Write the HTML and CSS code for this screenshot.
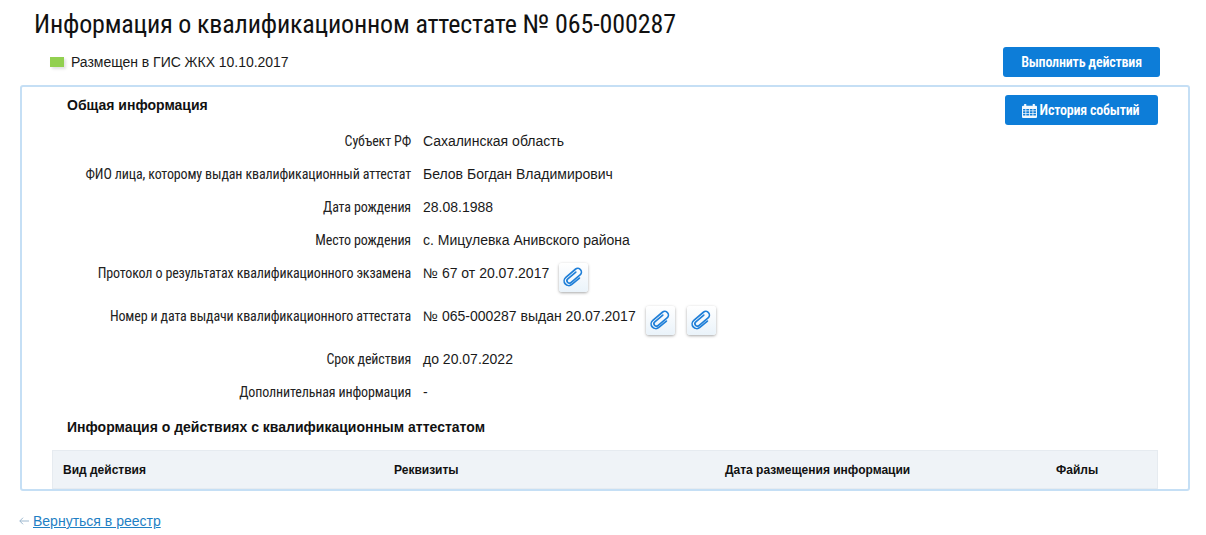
FILE: index.html
```html
<!DOCTYPE html>
<html lang="ru">
<head>
    <meta charset="UTF-8">
    <title>Информация о квалификационном аттестате</title>
    <link rel="stylesheet" href="styles.css">
</head>
<body>
    <svg class="defs" width="0" height="0">
        <symbol id="clip" viewBox="0 0 24 24">
            <path transform="rotate(50 12 12)" d="M9.500 7V17a2.300 2.300 0 0 0 4.600 0V5.500a3.500 3.500 0 0 0-7 0V17.500a4.500 4.500 0 0 0 9 0V8" fill="none" stroke="currentColor" stroke-width="1.600" stroke-linecap="round"/>
        </symbol>
    </svg>

    <h1 class="page-title">Информация о квалификационном аттестате <span class="cert-mark">№</span> <span class="cert-no">065-000287</span></h1>

    <div class="status-row">
        <div class="status"><span class="status-mark"></span>Размещен в ГИС ЖКХ 10.10.2017</div>
        <button class="btn btn-wide">Выполнить действия</button>
    </div>

    <section class="panel">
        <div class="panel-head">
            <h2>Общая информация</h2>
            <button class="btn btn-history">
                <svg class="cal" viewBox="0 0 14 14"><path fill="currentColor" d="M0 3.500a1 1 0 0 1 1-1h1V1h2v1.500h6V1h2v1.500h1a1 1 0 0 1 1 1V13a1 1 0 0 1-1 1H1a1 1 0 0 1-1-1zM1 5.500v1.500h2.200V5.500zm3 0v1.500h2.500V5.500zm3.300 0v1.500h2.500V5.500zm3.300 0v1.500H13V5.500zM1 7.800v1.500h2.200V7.800zm3 0v1.500h2.500V7.800zm3.300 0v1.500h2.500V7.800zm3.300 0v1.500H13V7.800zM1 10.100v1.500h2.200v-1.500zm3 0v1.500h2.500v-1.500zm3.300 0v1.500h2.500v-1.500zm3.300 0v1.500H13v-1.500z" fill-rule="evenodd" opacity="0.95"/></svg>
                История событий
            </button>
        </div>

        <dl class="info">
            <dt>Субъект РФ</dt>
            <dd>Сахалинская область</dd>
            <dt>ФИО лица, которому выдан квалификационный аттестат</dt>
            <dd>Белов Богдан Владимирович</dd>
            <dt>Дата рождения</dt>
            <dd>28.08.1988</dd>
            <dt>Место рождения</dt>
            <dd>с. Мицулевка Анивского района</dd>
            <dt class="tall">Протокол о результатах квалификационного экзамена</dt>
            <dd class="tall">№ 67 от 20.07.2017 <span class="clip"><svg><use href="#clip"/></svg></span></dd>
            <dt class="tall">Номер и дата выдачи квалификационного аттестата</dt>
            <dd class="tall">№ 065-000287 выдан 20.07.2017 <span class="clip"><svg><use href="#clip"/></svg></span><span class="clip"><svg><use href="#clip"/></svg></span></dd>
            <dt>Срок действия</dt>
            <dd>до 20.07.2022</dd>
            <dt>Дополнительная информация</dt>
            <dd>-</dd>
        </dl>

        <h2 class="actions-title">Информация о действиях с квалификационным аттестатом</h2>

        <div class="table-head">
            <div class="col-kind">Вид действия</div>
            <div class="col-req">Реквизиты</div>
            <div class="col-date">Дата размещения информации</div>
            <div class="col-files">Файлы</div>
        </div>
    </section>

    <div class="back">
        <svg class="back-arrow" viewBox="0 0 10 8"><path d="M4 .7 .8 4 4 7.300M.8 4H10" fill="none" stroke="currentColor"/></svg>
        <a href="#">Вернуться в реестр</a>
    </div>
</body>
</html>
```

FILE: styles.css
```css
body {
    margin: 0;
    font-family: "Liberation Sans", Arial, sans-serif;
    font-size: 14px;
    color: #1a1a1a;
    background: #fff;
    overflow: hidden;
}
.defs {
    position: absolute;
}
.page-title {
    margin: 0;
    padding: 8px 0 0 34px;
    height: 39px;
    font-family: Roboto, sans-serif;
    font-stretch: condensed;
    font-weight: 400;
    font-size: 26px;
    letter-spacing: -0.17px;
    line-height: 32px;
    color: #111;
}
.cert-mark {
    font-stretch: normal;
}
.cert-no {
    letter-spacing: -0.09px;
}
.status-row {
    display: flex;
    justify-content: space-between;
    align-items: center;
    height: 30px;
    padding: 0 46px 0 50px;
    margin-bottom: 8px;
}
.status {
    display: flex;
    align-items: center;
    letter-spacing: -0.03px;
}
.status-mark {
    width: 14px;
    height: 10px;
    margin-right: 7px;
    background: #92d050;
    box-shadow: 2px 2px 3px rgba(0,0,0,0.12);
}
.btn {
    display: inline-flex;
    align-items: center;
    justify-content: center;
    border: 0;
    border-radius: 3px;
    height: 30px;
    background: #0d7dd8;
    color: #fff;
    font-family: Roboto, sans-serif;
    font-stretch: condensed;
    font-weight: 600;
    font-size: 14px;
    letter-spacing: -0.2px;
}
.btn-wide {
    width: 157px;
}
.btn-history {
    width: 153px;
    gap: 3px;
    padding: 0 2px 0 0;
}
.cal {
    width: 15px;
    height: 15px;
}
.panel {
    margin: 0 16px 0 20px;
    height: 406px;
    box-sizing: border-box;
    border: 2px solid #c5dff5;
    border-radius: 3px;
    padding: 0 30px;
}
.panel-head {
    display: flex;
    justify-content: space-between;
    align-items: flex-start;
    padding: 8px 0 0 15px;
    height: 30px;
}
h2 {
    margin: 0;
    font-size: 14px;
    line-height: 20px;
    font-weight: 700;
    color: #111;
}
.info {
    display: grid;
    grid-template-columns: 389px 1fr;
    column-gap: 12px;
    margin: 0 0 0 -30px;
    padding: 0;
}
.info dt, .info dd {
    margin: 0;
    height: 33px;
    line-height: 33px;
}
.info .tall {
    height: 43px;
}
.info dt {
    text-align: right;
    font-family: Roboto, sans-serif;
    font-stretch: condensed;
    font-size: 14px;
    letter-spacing: -0.14px;
    color: #222;
}
.clip {
    display: inline-flex;
    align-items: center;
    justify-content: center;
    width: 29px;
    height: 29px;
    margin-left: 6px;
    margin-right: 6px;
    border-radius: 3px;
    vertical-align: -12px;
    background: linear-gradient(#fff, #eaf3fa);
    box-shadow: 0 1px 3px rgba(0,0,0,0.35);
    color: #1f7fd8;
}
.clip svg {
    width: 25px;
    height: 25px;
}
.actions-title {
    padding-left: 15px;
    margin-top: 8px;
}
.table-head {
    display: grid;
    grid-template-columns: 331px 331px 331px 1fr;
    align-items: center;
    height: 39px;
    margin-top: 13px;
    padding-left: 10px;
    box-sizing: border-box;
    background: #eff3f7;
    border: 1px solid #e6ebf0;
    font-size: 12px;
    font-weight: 700;
    color: #111;
}
.back {
    display: flex;
    align-items: center;
    gap: 4px;
    margin: 22px 0 0 19px;
    color: #9db8cf;
}
.back-arrow {
    width: 10px;
    height: 8px;
}
.back a {
    color: #1f7fc4;
}
```
